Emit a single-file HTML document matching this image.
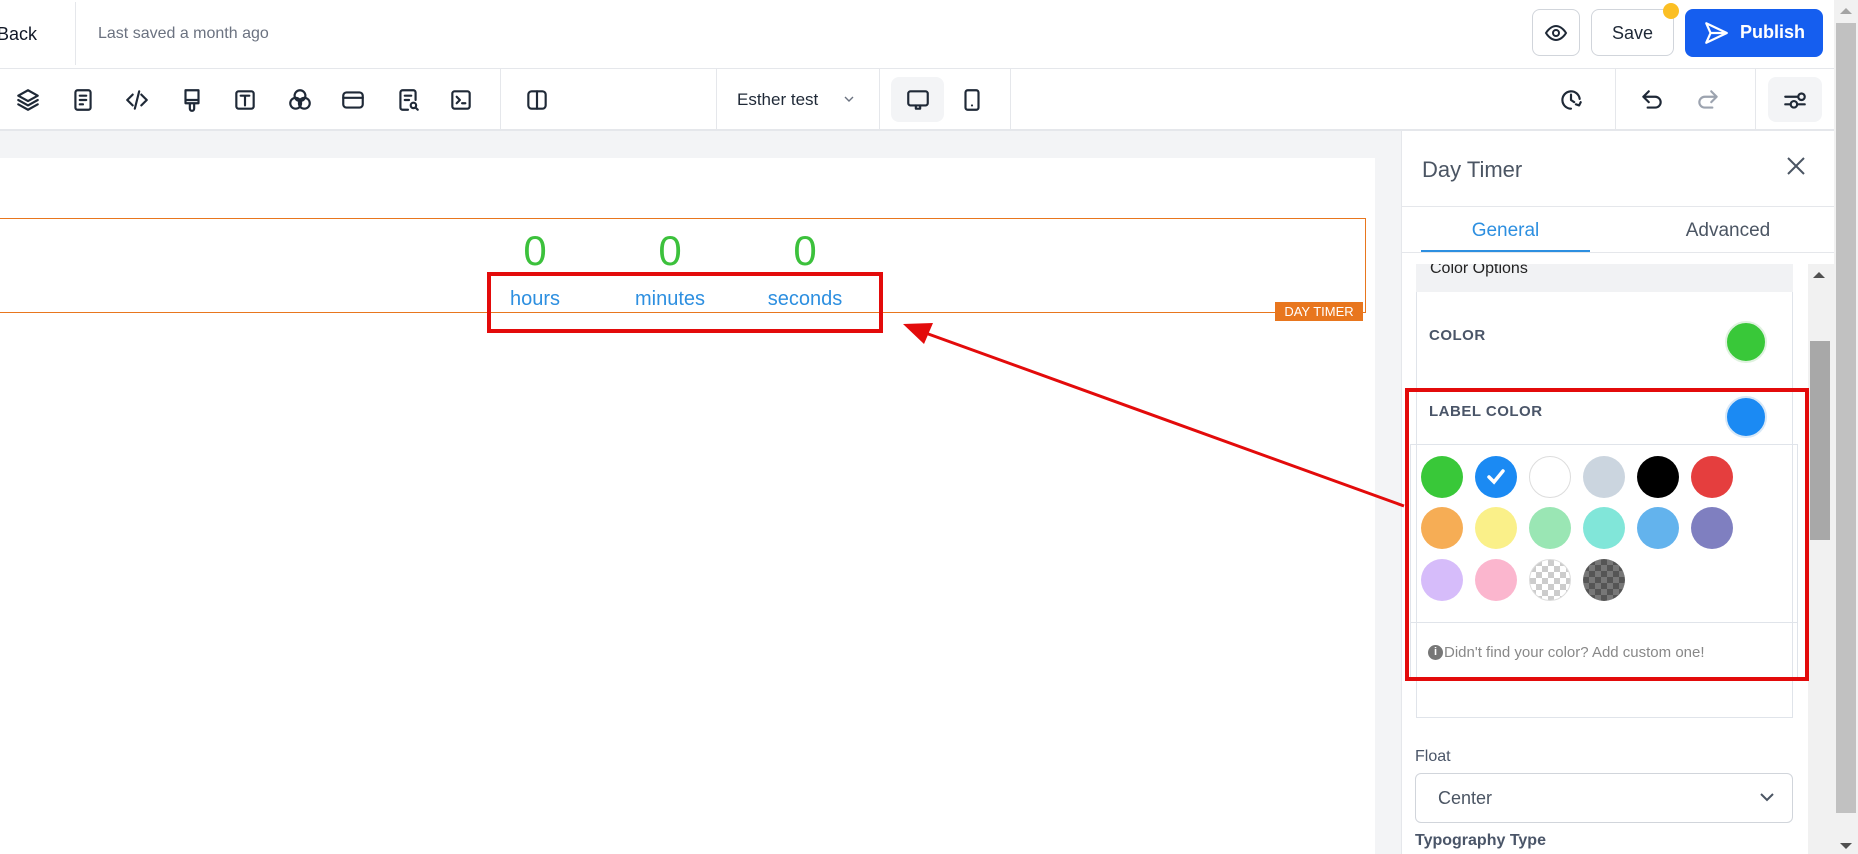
<!DOCTYPE html>
<html><head><meta charset="utf-8"><style>
*{box-sizing:border-box;margin:0;padding:0}
body{width:1858px;height:854px;overflow:hidden;position:relative;background:#fff;font-family:"Liberation Sans",sans-serif;color:#1f2937}
.a{position:absolute}
.ic{position:absolute;width:26px;height:26px}
.ic svg{width:26px;height:26px;fill:none;stroke:#1f2937;stroke-width:2;stroke-linecap:round;stroke-linejoin:round}
.vd{position:absolute;width:1px;background:#e5e7eb}
.sw{position:absolute;width:42px;height:42px;border-radius:50%}
</style></head><body>
<div class="a" style="left:-3px;top:24px;font-size:18px;color:#111827">Back</div>
<div class="vd" style="left:75px;top:2px;height:63px"></div>
<div class="a" style="left:98px;top:25px;font-size:16px;color:#6b7280">Last saved a month ago</div>
<div class="a" style="left:0;top:68px;width:1834px;height:1px;background:#e5e7eb"></div>

<div class="a" style="left:1532px;top:9px;width:48px;height:47px;border:1px solid #d1d5db;border-radius:8px"></div>
<svg class="a" style="left:1544px;top:21px" width="24" height="24" viewBox="0 0 24 24" fill="none" stroke="#1f2937" stroke-width="2"><path d="M2 12s4-7 10-7 10 7 10 7-4 7-10 7S2 12 2 12z"/><circle cx="12" cy="12" r="3"/></svg>
<div class="a" style="left:1591px;top:9px;width:83px;height:47px;border:1px solid #d1d5db;border-radius:8px;font-size:18px;text-align:center;line-height:47px;color:#1f2937">Save</div>
<div class="a" style="left:1663px;top:3px;width:16px;height:16px;border-radius:50%;background:#fbbf24"></div>
<div class="a" style="left:1685px;top:9px;width:138px;height:48px;background:#155eef;border-radius:8px;color:#fff;font-weight:bold;font-size:18px;line-height:46px;padding-left:55px">Publish</div>
<svg class="a" style="left:1703px;top:20px" width="26" height="26" viewBox="0 0 24 24" fill="none" stroke="#fff" stroke-width="2" stroke-linejoin="round"><path d="M3 3l19 9-19 9 4-9z M7 12h15"/></svg>

<div class="a" style="left:0;top:129px;width:1834px;height:2px;background:#e5e7eb"></div>
<div class="ic" style="left:15px;top:87px"><svg viewBox="0 0 24 24"><path d="M12 3l9 5-9 5-9-5z M3 12l9 5 9-5 M3 16l9 5 9-5"/></svg></div>
<div class="ic" style="left:70px;top:87px"><svg viewBox="0 0 24 24"><rect x="5" y="3" width="14" height="18" rx="2"/><path d="M9 8h6M9 12h6M9 16h3"/></svg></div>
<div class="ic" style="left:124px;top:87px"><svg viewBox="0 0 24 24"><path d="M8 7l-5 5 5 5M16 7l5 5-5 5M14 4l-4 16"/></svg></div>
<div class="ic" style="left:179px;top:87px"><svg viewBox="0 0 24 24"><path d="M6 3h12v9H6z M6 12v3h12v-3 M10 15v5a2 2 0 004 0v-5"/></svg></div>
<div class="ic" style="left:232px;top:87px"><svg viewBox="0 0 24 24"><rect x="4" y="4" width="16" height="16" rx="2"/><path d="M8 8h8M12 8v9"/></svg></div>
<div class="ic" style="left:287px;top:87px"><svg viewBox="0 0 24 24"><circle cx="12" cy="8" r="5"/><circle cx="8" cy="15" r="5"/><circle cx="16" cy="15" r="5"/></svg></div>
<div class="ic" style="left:340px;top:87px"><svg viewBox="0 0 24 24"><rect x="3" y="5" width="18" height="14" rx="3"/><path d="M3 10h18"/></svg></div>
<div class="ic" style="left:395px;top:87px"><svg viewBox="0 0 24 24"><path d="M12 21H7a2 2 0 01-2-2V5a2 2 0 012-2h10a2 2 0 012 2v7 M9 8h6M9 12h4"/><circle cx="17" cy="17" r="2.5"/><path d="M19 19l2 2"/></svg></div>
<div class="ic" style="left:448px;top:87px"><svg viewBox="0 0 24 24"><rect x="4" y="4" width="16" height="16" rx="2"/><path d="M8 9l3 3-3 3M13 15h3"/></svg></div>
<div class="vd" style="left:500px;top:69px;height:60px"></div>
<div class="ic" style="left:524px;top:87px"><svg viewBox="0 0 24 24"><rect x="4" y="4" width="16" height="16" rx="3"/><path d="M12 4v16"/></svg></div>
<div class="vd" style="left:716px;top:69px;height:60px"></div>
<div class="a" style="left:737px;top:90px;font-size:17px;color:#1f2937">Esther test</div>
<svg class="a" style="left:843px;top:93px" width="12" height="12" viewBox="0 0 12 12" fill="none" stroke="#6b7280" stroke-width="1.4"><path d="M2 4l4 4 4-4"/></svg>
<div class="vd" style="left:879px;top:69px;height:60px"></div>
<div class="a" style="left:891px;top:77px;width:53px;height:45px;background:#f3f4f6;border-radius:8px"></div>
<div class="ic" style="left:905px;top:87px"><svg viewBox="0 0 24 24"><rect x="3" y="4" width="18" height="13" rx="2"/><path d="M10 17v3h4v-3"/></svg></div>
<div class="ic" style="left:959px;top:87px"><svg viewBox="0 0 24 24"><rect x="6" y="3" width="12" height="18" rx="2"/><path d="M12 17h.01"/></svg></div>
<div class="vd" style="left:1010px;top:69px;height:60px"></div>
<div class="ic" style="left:1558px;top:87px"><svg viewBox="0 0 24 24"><path d="M20 11A8 8 0 1012 20M12 7v5l3 2M21 14l-1.5 3-3-1"/></svg></div>
<div class="vd" style="left:1615px;top:69px;height:60px"></div>
<div class="ic" style="left:1639px;top:87px"><svg viewBox="0 0 24 24"><path d="M9 14L4 9l5-5M4 9h11a5 5 0 010 10h-7"/></svg></div>
<div class="ic" style="left:1695px;top:87px"><svg viewBox="0 0 24 24" style="stroke:#9ca3af"><path d="M15 14l5-5-5-5M20 9H9a5 5 0 000 10h7"/></svg></div>
<div class="vd" style="left:1755px;top:69px;height:60px"></div>
<div class="a" style="left:1768px;top:77px;width:54px;height:45px;background:#f3f4f6;border-radius:8px"></div>
<div class="ic" style="left:1782px;top:87px"><svg viewBox="0 0 24 24"><path d="M3 9h12M3 16h5"/><circle cx="18" cy="9" r="3"/><circle cx="11" cy="16" r="3"/><path d="M14 16h7"/></svg></div>

<div class="a" style="left:0;top:131px;width:1401px;height:723px;background:#f3f4f6"></div>
<div class="a" style="left:0;top:158px;width:1375px;height:696px;background:#fff"></div>
<div class="a" style="left:-2px;top:218px;width:1368px;height:95px;border:1.5px solid #e8761e"></div>
<div class="a" style="left:1275px;top:302px;width:88px;height:19px;background:#e8761e;color:#fff;font-size:13px;line-height:19px;text-align:center">DAY TIMER</div>
<div class="a" style="left:485px;top:227px;width:100px;text-align:center;font-size:42px;color:#3cc13c">0</div>
<div class="a" style="left:620px;top:227px;width:100px;text-align:center;font-size:42px;color:#3cc13c">0</div>
<div class="a" style="left:755px;top:227px;width:100px;text-align:center;font-size:42px;color:#3cc13c">0</div>
<div class="a" style="left:485px;top:288px;width:100px;text-align:center;font-size:20px;color:#2d8fe0">hours</div>
<div class="a" style="left:610px;top:288px;width:120px;text-align:center;font-size:20px;color:#2d8fe0">minutes</div>
<div class="a" style="left:745px;top:288px;width:120px;text-align:center;font-size:20px;color:#2d8fe0">seconds</div>
<div class="a" style="left:487px;top:272px;width:396px;height:61px;border:4px solid #e30b0b"></div>

<div class="a" style="left:1401px;top:131px;width:433px;height:723px;background:#fff;border-left:1px solid #e5e7eb"></div>
<div class="a" style="left:1422px;top:157px;font-size:22px;color:#4b5563">Day Timer</div>
<svg class="a" style="left:1786px;top:156px" width="20" height="20" viewBox="0 0 20 20" stroke="#4b5563" stroke-width="2"><path d="M2 2l16 16M18 2L2 18"/></svg>
<div class="a" style="left:1401px;top:206px;width:433px;height:1px;background:#e5e7eb"></div>
<div class="a" style="left:1421px;top:220px;width:169px;text-align:center;font-size:19px;color:#2d8fe0">General</div>
<div class="a" style="left:1638px;top:220px;width:180px;text-align:center;font-size:19px;color:#4b5563">Advanced</div>
<div class="a" style="left:1421px;top:250px;width:169px;height:3px;background:#2d8fe0"></div>
<div class="a" style="left:1401px;top:252px;width:433px;height:1px;background:#e5e7eb"></div>
<div class="a" style="left:1808px;top:264px;width:26px;height:590px;background:#f1f1f1"></div>
<div class="a" style="left:1810px;top:341px;width:20px;height:199px;background:#a8a8a8"></div>
<div class="a" style="left:1813px;top:272px;width:0;height:0;border-left:6px solid transparent;border-right:6px solid transparent;border-bottom:6px solid #505050"></div>
<div class="a" style="left:1416px;top:264px;width:377px;height:454px;border:1px solid #e0e4ea;border-top:none"></div>
<div class="a" style="left:1416px;top:264px;width:377px;height:28px;background:#f1f2f4;overflow:hidden"><div style="position:absolute;left:14px;top:-4px;font-size:16px;color:#222">Color Options</div></div>
<div class="a" style="left:1429px;top:327px;font-size:15px;font-weight:bold;color:#4a5568;letter-spacing:.5px">COLOR</div>
<div class="sw" style="left:1725px;top:321px;background:#39c839;border:2px solid #dff2df"></div>
<div class="a" style="left:1429px;top:403px;font-size:15px;font-weight:bold;color:#4a5568;letter-spacing:.5px">LABEL COLOR</div>
<div class="sw" style="left:1725px;top:396px;background:#1b8af3;border:2px solid #d8e8f7"></div>
<div class="a" style="left:1410px;top:444px;width:388px;height:236px;border:1px solid #e0e4ea"></div>
<div class="a" style="left:1410px;top:622px;width:388px;height:1px;background:#e0e4ea"></div>
<div class="sw" style="left:1421px;top:456px;background:#39c839"></div>
<div class="sw" style="left:1475px;top:456px;background:#1b8af3"><svg width="42" height="42" viewBox="0 0 42 42" fill="none" stroke="#fff" stroke-width="3.5" stroke-linecap="round"><path d="M14 21l5 5 9-11"/></svg></div>
<div class="sw" style="left:1529px;top:456px;background:#fff;border:1px solid #ddd"></div>
<div class="sw" style="left:1583px;top:456px;background:#cbd5df"></div>
<div class="sw" style="left:1637px;top:456px;background:#000"></div>
<div class="sw" style="left:1691px;top:456px;background:#e53e3e"></div>
<div class="sw" style="left:1421px;top:507px;background:#f6ad55"></div>
<div class="sw" style="left:1475px;top:507px;background:#faf089"></div>
<div class="sw" style="left:1529px;top:507px;background:#9ae6b4"></div>
<div class="sw" style="left:1583px;top:507px;background:#81e6d9"></div>
<div class="sw" style="left:1637px;top:507px;background:#63b3ed"></div>
<div class="sw" style="left:1691px;top:507px;background:#7f7fc0"></div>
<div class="sw" style="left:1421px;top:559px;background:#d6bcfa"></div>
<div class="sw" style="left:1475px;top:559px;background:#fbb6ce"></div>
<div class="sw" style="left:1529px;top:559px;border:1px solid #ddd;background:repeating-conic-gradient(#ccc 0 25%,#fff 0 50%) 0 0/12px 12px"></div>
<div class="sw" style="left:1583px;top:559px;background:repeating-conic-gradient(#555 0 25%,#777 0 50%) 0 0/12px 12px"></div>
<div class="a" style="left:1428px;top:645px;width:15px;height:15px;border-radius:50%;background:#777;color:#fff;font-size:11px;font-weight:bold;text-align:center;line-height:15px">i</div>
<div class="a" style="left:1444px;top:644px;font-size:15px;color:#888">Didn't find your color? Add custom one!</div>
<div class="a" style="left:1405px;top:388px;width:404px;height:293px;border:4px solid #e30b0b"></div>
<div class="a" style="left:1415px;top:748px;font-size:16px;color:#4a5568">Float</div>
<div class="a" style="left:1415px;top:773px;width:378px;height:50px;border:1px solid #d1d5db;border-radius:6px;font-size:18px;color:#4b5563;line-height:48px;padding-left:22px">Center</div>
<svg class="a" style="left:1759px;top:791px" width="16" height="12" viewBox="0 0 16 12" fill="none" stroke="#4b5563" stroke-width="2"><path d="M2 3l6 6 6-6"/></svg>
<div class="a" style="left:1415px;top:832px;font-size:16px;font-weight:bold;color:#4a5568">Typography Type</div>

<div class="a" style="left:1834px;top:0;width:24px;height:854px;background:#f1f1f1"></div>
<div class="a" style="left:1836px;top:23px;width:20px;height:790px;background:#c1c1c1"></div>
<div class="a" style="left:1840px;top:8px;width:0;height:0;border-left:6px solid transparent;border-right:6px solid transparent;border-bottom:6px solid #a3a3a3"></div>
<div class="a" style="left:1840px;top:843px;width:0;height:0;border-left:6px solid transparent;border-right:6px solid transparent;border-top:6px solid #505050"></div>

<svg class="a" style="left:0;top:0" width="1858" height="854"><line x1="1404" y1="506" x2="920" y2="331" stroke="#e30b0b" stroke-width="3"/><polygon points="903,324 933,323 924,344" fill="#e30b0b"/></svg>
</body></html>
